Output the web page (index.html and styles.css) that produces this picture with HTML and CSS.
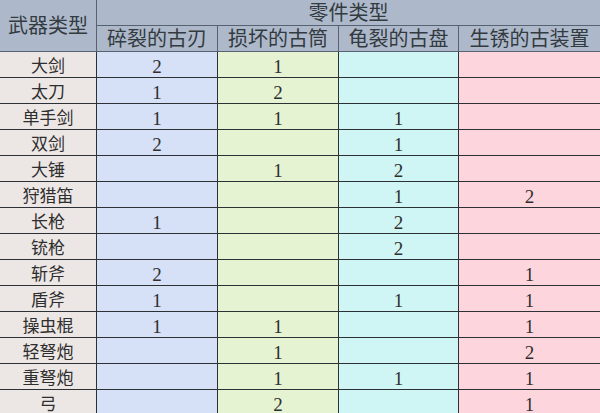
FILE: index.html
```html
<!DOCTYPE html>
<html lang="zh-CN">
<head>
<meta charset="utf-8">
<title>武器类型 / 零件类型</title>
<link rel="stylesheet" href="styles.css">
</head>
<body>
<div class="sheet">
  <div class="cell head corner">武器类型</div>
  <div class="cell head group">零件类型</div>
  <div class="cell head sub">碎裂的古刃</div>
  <div class="cell head sub">损坏的古筒</div>
  <div class="cell head sub">龟裂的古盘</div>
  <div class="cell head sub last">生锈的古装置</div>

  <div class="cell name">大剑</div><div class="cell c1">2</div><div class="cell c2">1</div><div class="cell c3"></div><div class="cell c4"></div>
  <div class="cell name">太刀</div><div class="cell c1">1</div><div class="cell c2">2</div><div class="cell c3"></div><div class="cell c4"></div>
  <div class="cell name">单手剑</div><div class="cell c1">1</div><div class="cell c2">1</div><div class="cell c3">1</div><div class="cell c4"></div>
  <div class="cell name">双剑</div><div class="cell c1">2</div><div class="cell c2"></div><div class="cell c3">1</div><div class="cell c4"></div>
  <div class="cell name">大锤</div><div class="cell c1"></div><div class="cell c2">1</div><div class="cell c3">2</div><div class="cell c4"></div>
  <div class="cell name">狩猎笛</div><div class="cell c1"></div><div class="cell c2"></div><div class="cell c3">1</div><div class="cell c4">2</div>
  <div class="cell name">长枪</div><div class="cell c1">1</div><div class="cell c2"></div><div class="cell c3">2</div><div class="cell c4"></div>
  <div class="cell name">铳枪</div><div class="cell c1"></div><div class="cell c2"></div><div class="cell c3">2</div><div class="cell c4"></div>
  <div class="cell name">斩斧</div><div class="cell c1">2</div><div class="cell c2"></div><div class="cell c3"></div><div class="cell c4">1</div>
  <div class="cell name">盾斧</div><div class="cell c1">1</div><div class="cell c2"></div><div class="cell c3">1</div><div class="cell c4">1</div>
  <div class="cell name">操虫棍</div><div class="cell c1">1</div><div class="cell c2">1</div><div class="cell c3"></div><div class="cell c4">1</div>
  <div class="cell name">轻弩炮</div><div class="cell c1"></div><div class="cell c2">1</div><div class="cell c3"></div><div class="cell c4">2</div>
  <div class="cell name">重弩炮</div><div class="cell c1"></div><div class="cell c2">1</div><div class="cell c3">1</div><div class="cell c4">1</div>
  <div class="cell name">弓</div><div class="cell c1"></div><div class="cell c2">2</div><div class="cell c3"></div><div class="cell c4">1</div>
</div>
</body>
</html>
```
FILE: styles.css
```css
html, body {
  margin: 0;
  padding: 0;
  background: #ffffff;
  overflow: hidden;
}

.sheet {
  display: grid;
  grid-template-columns: 97px 121px 121px 120px 141px;
  grid-auto-rows: 26px;
  width: 600px;
  font-family: "Liberation Serif", "Noto Sans CJK SC", serif;
  color: #2e2e2e;
}

.cell {
  box-sizing: border-box;
  display: flex;
  align-items: center;
  justify-content: center;
  border-right: 1px solid #2c3136;
  border-bottom: 1px solid #2c3136;
  font-size: 19px;
  line-height: 1;
  padding-top: 3px;
  white-space: nowrap;
}

.head {
  background: #adb9cb;
  border-color: #56626f;
  font-size: 20px;
  color: #333a40;
  padding-top: 1px;
}

.corner {
  grid-row: span 2;
}

.group {
  grid-column: span 4;
  border-right: none;
}

.last {
  border-right: none;
}

.name {
  background: #ece6e5;
  font-size: 17px;
}
.c1 { background: #d6e0f7; }
.c2 { background: #e5f3d3; }
.c3 { background: #cff5f4; }
.c4 { background: #fdd6dd; border-right: none; }
```
